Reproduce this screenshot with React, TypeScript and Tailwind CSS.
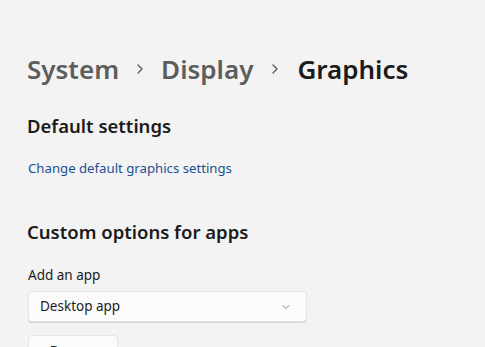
import { ChevronRight, ChevronDown } from "lucide-react";

export default function App() {
  return (
    <div
      className="h-[347px] w-[485px] overflow-hidden bg-[#f3f3f3] pl-[27px] text-[#1b1b1b]"
      style={{ fontFamily: '"Noto Sans", "Open Sans", sans-serif' }}
    >
      <div className="flex items-center pt-[50px] text-[26px] font-semibold leading-[38px]">
        <span className="text-[#5d5d5d]">System</span>
        <ChevronRight className="mx-[13px] h-4 w-4 text-[#5d5d5d]" strokeWidth={2} />
        <span className="text-[#5d5d5d]">Display</span>
        <ChevronRight className="mx-[14px] h-4 w-4 text-[#5d5d5d]" strokeWidth={2} />
        <span>Graphics</span>
      </div>

      <h2 className="mt-[24px] text-[18.5px] font-semibold leading-[28px]">
        Default settings
      </h2>
      <a className="mt-[18px] block pl-[1px] text-[13.2px] leading-[20px] text-[#1c4f8f]">
        Change default graphics settings
      </a>

      <h2 className="mt-[40px] text-[18.5px] font-semibold leading-[28px]">
        Custom options for apps
      </h2>
      <p className="mt-[19px] pl-[1px] text-[13.5px] leading-[20px]">Add an app</p>

      <div className="mt-[6px] ml-[1px] flex h-[31px] w-[279px] items-center justify-between rounded-[4px] border border-[#e5e5e5] bg-[#fbfbfb] px-[11px] shadow-[0_1px_0_#d4d4d4]">
        <span className="text-[13.5px]">Desktop app</span>
        <ChevronDown className="mr-[3px] h-3 w-3 text-[#606060]" strokeWidth={1.5} />
      </div>

      <button className="mt-[13px] ml-[1px] flex h-[32px] w-[90px] items-center justify-center rounded-[4px] border border-[#e5e5e5] bg-[#fbfbfb] text-[13.5px]">
        Browse
      </button>
    </div>
  );
}
